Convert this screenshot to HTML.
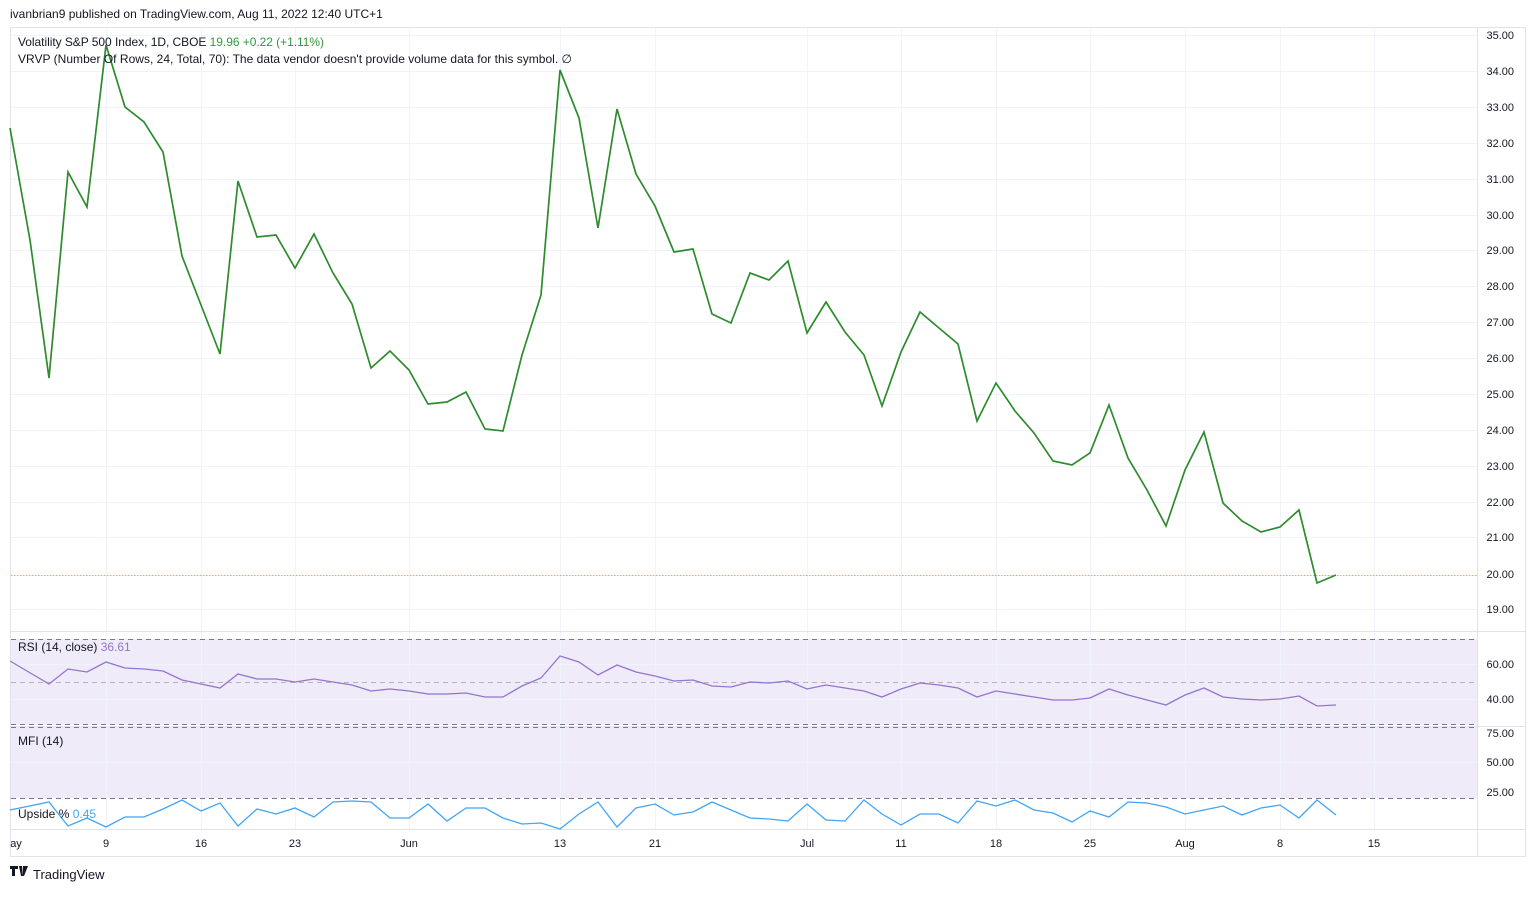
<!DOCTYPE html>
<html><head><meta charset="utf-8"><style>
body{margin:0;background:#fff;width:1536px;height:892px;overflow:hidden;font-family:"Liberation Sans",sans-serif}
svg text{font-family:"Liberation Sans",sans-serif}
</style></head><body>
<svg width="1536" height="892" xmlns="http://www.w3.org/2000/svg">
<text x="10" y="18" font-size="12" fill="#131722">ivanbrian9 published on TradingView.com, Aug 11, 2022 12:40 UTC+1</text>
<rect x="10.5" y="27.5" width="1515" height="829" fill="none" stroke="#e0e3eb"/>
<rect x="11" y="639" width="1466" height="86" fill="#efebf8"/>
<rect x="11" y="727" width="1466" height="71" fill="#efebf8"/>
<g stroke="#f0f3fa" stroke-width="1">
<line x1="106.5" y1="28" x2="106.5" y2="829"/><line x1="201.5" y1="28" x2="201.5" y2="829"/><line x1="295.5" y1="28" x2="295.5" y2="829"/><line x1="409.5" y1="28" x2="409.5" y2="829"/><line x1="560.5" y1="28" x2="560.5" y2="829"/><line x1="655.5" y1="28" x2="655.5" y2="829"/><line x1="807.5" y1="28" x2="807.5" y2="829"/><line x1="901.5" y1="28" x2="901.5" y2="829"/><line x1="996.5" y1="28" x2="996.5" y2="829"/><line x1="1090.5" y1="28" x2="1090.5" y2="829"/><line x1="1185.5" y1="28" x2="1185.5" y2="829"/><line x1="1280.5" y1="28" x2="1280.5" y2="829"/><line x1="1374.5" y1="28" x2="1374.5" y2="829"/>
<line x1="11" y1="35.5" x2="1477" y2="35.5"/><line x1="11" y1="71.5" x2="1477" y2="71.5"/><line x1="11" y1="107.5" x2="1477" y2="107.5"/><line x1="11" y1="143.5" x2="1477" y2="143.5"/><line x1="11" y1="179.5" x2="1477" y2="179.5"/><line x1="11" y1="215.5" x2="1477" y2="215.5"/><line x1="11" y1="250.5" x2="1477" y2="250.5"/><line x1="11" y1="286.5" x2="1477" y2="286.5"/><line x1="11" y1="322.5" x2="1477" y2="322.5"/><line x1="11" y1="358.5" x2="1477" y2="358.5"/><line x1="11" y1="394.5" x2="1477" y2="394.5"/><line x1="11" y1="430.5" x2="1477" y2="430.5"/><line x1="11" y1="466.5" x2="1477" y2="466.5"/><line x1="11" y1="502.5" x2="1477" y2="502.5"/><line x1="11" y1="537.5" x2="1477" y2="537.5"/><line x1="11" y1="609.5" x2="1477" y2="609.5"/>
<line x1="11" y1="664.5" x2="1477" y2="664.5"/><line x1="11" y1="699.5" x2="1477" y2="699.5"/><line x1="11" y1="762.5" x2="1477" y2="762.5"/>
</g>
<g stroke="#e0e3eb"><line x1="11" y1="631.5" x2="1526" y2="631.5"/><line x1="11" y1="726.5" x2="1526" y2="726.5"/><line x1="11" y1="829.5" x2="1526" y2="829.5"/><line x1="1477.5" y1="28" x2="1477.5" y2="857"/></g>
<g stroke="#787b86" stroke-dasharray="5,4" stroke-width="1">
<line x1="11" y1="639.5" x2="1477" y2="639.5"/><line x1="11" y1="682.5" x2="1477" y2="682.5" stroke="#b2b5be"/><line x1="11" y1="724.5" x2="1477" y2="724.5"/><line x1="11" y1="727.5" x2="1477" y2="727.5"/><line x1="11" y1="798.5" x2="1477" y2="798.5"/>
</g>
<line x1="11" y1="575.5" x2="1477" y2="575.5" stroke="#f9a825" stroke-dasharray="1.5,1.5"/>
<polyline fill="none" stroke="#2e8b2e" stroke-width="1.7" points="10,128 30,240 49,378 68,172 87,207 106,45 125,107 144,122 163,152 182,256 201,305 220,354 238,181 257,237 276,235 295,268 314,234 333,273 352,304 371,368 390,351 409,370 428,404 447,402 466,392 485,429 503,431 522,355 541,295 560,70 579,118 598,228 617,109 636,174 655,206 674,252 693,249 712,314 731,323 750,273 769,280 788,261 807,333 826,302 845,332 864,355 882,406 901,352 920,312 939,328 958,344 977,421 996,383 1015,411 1034,433 1053,461 1072,465 1090,453 1109,405 1128,458 1147,490 1166,526 1185,470 1204,432 1223,503 1242,521 1261,532 1280,527 1299,510 1317,583 1336,575"/>
<polyline fill="none" stroke="#9575cd" stroke-width="1.3" points="10,661 49,684 68,669 87,672 106,662 125,668 144,669 163,671 182,680 201,684 220,688 238,674 257,679 276,679 295,682 314,679 333,682 352,685 371,691 390,689 409,691 428,694 447,694 466,693 485,697 503,697 522,686 541,678 560,656 579,662 598,675 617,665 636,672 655,676 674,681 693,680 712,686 731,687 750,682 769,683 788,681 807,689 826,685 845,688 864,691 882,697 901,689 920,683 939,685 958,688 977,697 996,691 1015,694 1034,697 1053,700 1072,700 1090,698 1109,689 1128,695 1147,700 1166,705 1185,695 1204,688 1223,697 1242,699 1261,700 1280,699 1299,696 1317,706 1336,705"/>
<polyline fill="none" stroke="#42a5f5" stroke-width="1.3" points="10,810 49,802 68,826 87,818 106,827 125,817 144,817 163,809 182,800 201,811 220,803 238,826 257,809 276,814 295,808 314,817 333,802 352,801 371,802 390,818 409,818 428,804 447,821 466,808 485,808 503,818 522,824 541,823 560,829 579,814 598,802 617,827 636,808 655,804 674,815 693,812 712,802 731,810 750,818 769,819 788,821 807,804 826,820 845,821 864,800 882,814 901,825 920,814 939,814 958,823 977,801 996,806 1015,800 1034,810 1053,813 1072,822 1090,811 1109,817 1128,802 1147,803 1166,807 1185,814 1204,810 1223,806 1242,815 1261,808 1280,805 1299,818 1317,800 1336,815"/>
<g font-size="12" fill="#131722">
<text x="18" y="46" textLength="306">Volatility S&amp;P 500 Index, 1D, CBOE <tspan fill="#2e9b3c">19.96  +0.22 (+1.11%)</tspan></text>
<text x="18" y="63" textLength="554">VRVP (Number Of Rows, 24, Total, 70): The data vendor doesn't provide volume data for this symbol.  ∅</text>
<text x="18" y="651">RSI (14, close) <tspan fill="#9575cd">36.61</tspan></text>
<text x="18" y="745">MFI (14)</text>
<text x="18" y="818">Upside % <tspan fill="#42a5f5">0.45</tspan></text>
</g>
<g font-size="11" fill="#131722" text-anchor="end">
<text x="1514" y="39">35.00</text><text x="1514" y="75">34.00</text><text x="1514" y="111">33.00</text><text x="1514" y="147">32.00</text><text x="1514" y="183">31.00</text><text x="1514" y="219">30.00</text><text x="1514" y="254">29.00</text><text x="1514" y="290">28.00</text><text x="1514" y="326">27.00</text><text x="1514" y="362">26.00</text><text x="1514" y="398">25.00</text><text x="1514" y="434">24.00</text><text x="1514" y="470">23.00</text><text x="1514" y="506">22.00</text><text x="1514" y="541">21.00</text><text x="1514" y="578">20.00</text><text x="1514" y="613">19.00</text>
<text x="1514" y="668">60.00</text><text x="1514" y="703">40.00</text><text x="1514" y="737">75.00</text><text x="1514" y="766">50.00</text><text x="1514" y="796">25.00</text>
</g>
<g font-size="11" fill="#131722" text-anchor="middle">
<text x="16" y="847">ay</text><text x="106" y="847">9</text><text x="201" y="847">16</text><text x="295" y="847">23</text><text x="409" y="847">Jun</text><text x="560" y="847">13</text><text x="655" y="847">21</text><text x="807" y="847">Jul</text><text x="901" y="847">11</text><text x="996" y="847">18</text><text x="1090" y="847">25</text><text x="1185" y="847">Aug</text><text x="1280" y="847">8</text><text x="1374" y="847">15</text>
</g>
<path d="M10 866h8v3h-3v7h-3v-7h-2z M19 866h3v10h-1z M23 866h5l-4 10h-2z" fill="#131722"/>
<text x="33" y="879" font-size="13" fill="#131722">TradingView</text>
</svg>
</body></html>
